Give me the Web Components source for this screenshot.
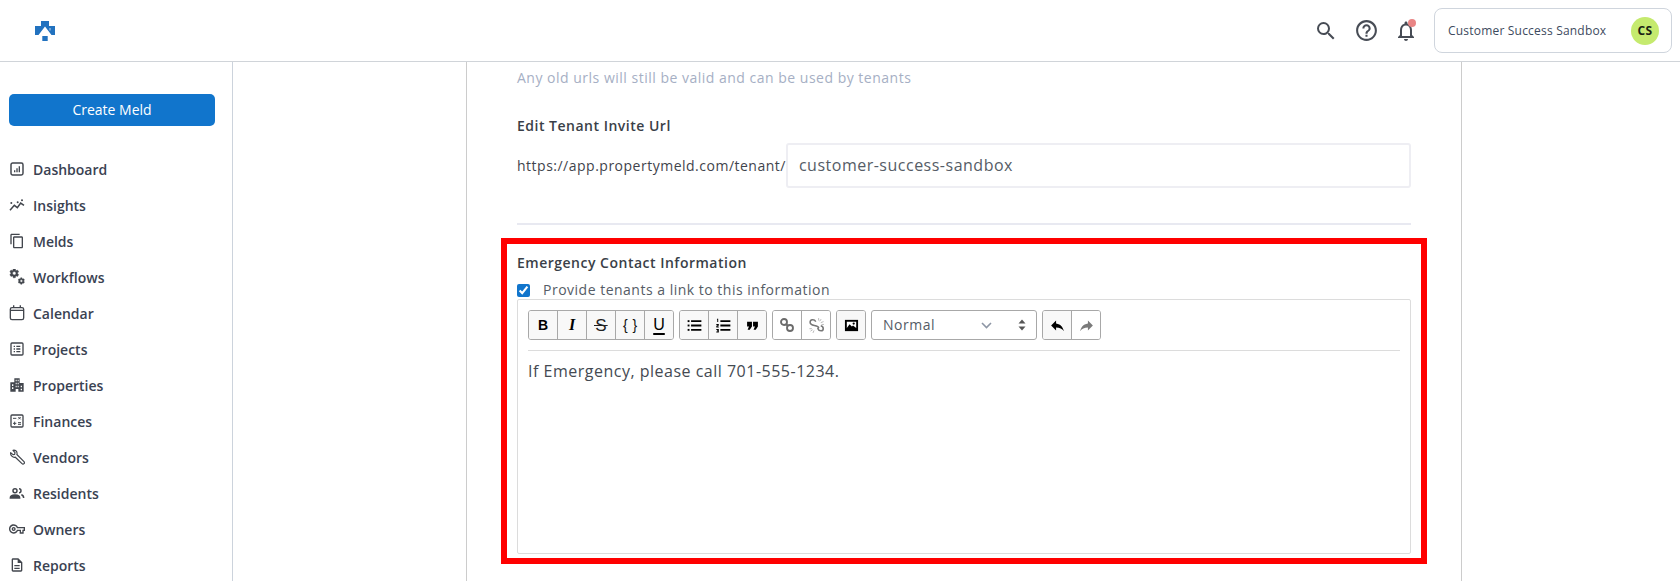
<!DOCTYPE html>
<html>
<head>
<meta charset="utf-8">
<title>Tenant settings</title>
<style>
  html, body { margin: 0; height: 581px; overflow: hidden; background: #fff; }
  body { font-family: "Open Sans", "Liberation Sans", sans-serif; color: #3a4252; }
</style>
</head>
<body>
<app-shell>
  <top-bar slot="top"></top-bar>
  <side-nav slot="side"></side-nav>
  <settings-panel slot="main"></settings-panel>
</app-shell>

<script>
const GEAR = 'M19.14 12.94c.04-.3.06-.61.06-.94 0-.32-.02-.64-.07-.94l2.03-1.58a.49.49 0 0 0 .12-.61l-1.92-3.32a.488.488 0 0 0-.59-.22l-2.39.96c-.5-.38-1.03-.7-1.62-.94l-.36-2.54a.484.484 0 0 0-.48-.41h-3.84c-.24 0-.43.17-.47.41l-.36 2.54c-.59.24-1.13.57-1.62.94l-2.39-.96c-.22-.08-.47 0-.59.22L2.74 8.87c-.12.21-.08.47.12.61l2.03 1.58c-.05.3-.09.63-.09.94s.02.64.07.94l-2.03 1.58a.49.49 0 0 0-.12.61l1.92 3.32c.12.22.37.29.59.22l2.39-.96c.5.38 1.03.7 1.62.94l.36 2.54c.05.24.24.41.48.41h3.84c.24 0 .44-.17.47-.41l.36-2.54c.59-.24 1.13-.56 1.62-.94l2.39.96c.22.08.47 0 .59-.22l1.92-3.32c.12-.22.07-.47-.12-.61l-2.01-1.58zM12 15.6c-1.98 0-3.6-1.62-3.6-3.6s1.62-3.6 3.6-3.6 3.6 1.62 3.6 3.6-1.62 3.6-3.6 3.6z';

const ICONS = {
  dashboard: '<rect x="3" y="3" width="18" height="18" rx="2.5" fill="none" stroke="currentColor" stroke-width="2.2"/><path d="M7.500 14h2v3h-2zM11 11h2v6h-2zM14.500 8h2v9h-2z" fill="currentColor"/>',
  insights: '<path d="M1.500 20l6.500-7.500 4.500 3.500 5-7 5 3.500" fill="none" stroke="currentColor" stroke-width="2.300"/><circle cx="3.500" cy="9" r="1.500" fill="currentColor"/><circle cx="13" cy="8" r="1.500" fill="currentColor"/><circle cx="19.500" cy="5" r="1.500" fill="currentColor"/>',
  melds: '<path fill="currentColor" d="M16 1H4c-1.1 0-2 .9-2 2v14h2V3h12V1zm3 4H8c-1.1 0-2 .9-2 2v14c0 1.1.9 2 2 2h11c1.1 0 2-.9 2-2V7c0-1.1-.9-2-2-2zm0 16H8V7h11v14z"/>',
  workflows: `<g fill="currentColor" stroke="currentColor"><path transform="translate(-.5 -2) scale(.7)" stroke-width="1" d="${GEAR}"/><path transform="translate(12.500 12) scale(.5)" stroke-width="1.200" d="${GEAR}"/></g>`,
  calendar: '<rect x="2" y="4" width="20" height="18" rx="2.500" fill="none" stroke="currentColor" stroke-width="2"/><path d="M2 8h20M7 .5v4M17 .5v4" stroke="currentColor" stroke-width="2" fill="none"/>',
  projects: '<rect x="3" y="3" width="18" height="18" rx="1.500" fill="none" stroke="currentColor" stroke-width="2"/><path d="M7 7h2v2H7zM7 11h2v2H7zM7 15h2v2H7zM11 7h6v2h-6zM11 11h6v2h-6zM11 15h6v2h-6z" fill="currentColor"/>',
  properties: '<path fill="currentColor" fill-rule="evenodd" d="M8 2h8v7h6v13h-8v-4h-4v4H2V8h6V2zm2 2v2.500h1.500V4H10zm3 0v2.500h1.500V4H13zm-3 4.500V11h1.500V8.500H10zm3 0V11h1.500V8.500H13zm-3 4.500v2.500h1.500V13H10zm3 0v2.500h1.500V13H13zM4.500 11v2.500h2V11h-2zm0 4.500V18h2v-2.500h-2zm13-2.500v2.500h2V13h-2zm0 4.500V20h2v-2.500h-2z"/>',
  finances: '<rect x="3" y="3" width="18" height="18" rx="1.500" fill="none" stroke="currentColor" stroke-width="2"/><path d="M6 8h5M6 15.500h5M8.500 13v5M13.500 14.500h4.500M13.500 17h4.500M14 6l3.500 3.500M17.500 6L14 9.500" stroke="currentColor" stroke-width="1.500" fill="none"/>',
  vendors: '<path d="M2.500 5.500l3.500 3 2.500-.5.500-2.500-3-3.500c3-.8 6.500 1.200 6 5l-.2 1.200L22.500 19a2 2 0 0 1-3 3l-10-9.700c-3.800 1-7.800-2.800-7-6.800z" fill="none" stroke="currentColor" stroke-width="1.800" stroke-linejoin="round"/>',
  residents: '<g fill="none" stroke="currentColor" stroke-width="2.200"><circle cx="9" cy="8.500" r="3"/><path d="M2 19.500c0-3 3-4.500 7-4.500s7 1.500 7 4.500z" fill="currentColor"/><path d="M15 5.500a3 3 0 0 1 0 6M18.500 14.500c2 .5 3.500 2 3.500 5"/></g>',
  owners: '<path fill="currentColor" d="M22 19h-6v-4h-2.680c-1.140 2.420-3.600 4-6.320 4-3.860 0-7-3.140-7-7s3.140-7 7-7c2.720 0 5.170 1.580 6.320 4H24v6h-2v4zm-4-2h2v-4h2v-2H11.940l-.23-.67C11.010 8.340 9.110 7 7 7c-2.760 0-5 2.240-5 5s2.240 5 5 5c2.110 0 4.010-1.340 4.710-3.330l.23-.67H18v4zM7 15c-1.650 0-3-1.350-3-3s1.350-3 3-3 3 1.350 3 3-1.350 3-3 3zm0-4c-.55 0-1 .45-1 1s.45 1 1 1 1-.45 1-1-.45-1-1-1z"/>',
  reports: '<path fill="currentColor" d="M8 16h8v2H8zm0-4h8v2H8zm6-10H6c-1.100 0-2 .9-2 2v16c0 1.100.89 2 1.990 2H18c1.100 0 2-.9 2-2V8l-6-6zm4 18H6V4h7v5h5v11z"/>',
  search: '<path fill="currentColor" d="M15.500 14h-.79l-.28-.27A6.471 6.471 0 0 0 16 9.500 6.500 6.500 0 1 0 9.500 16c1.610 0 3.090-.59 4.230-1.570l.27.28v.79l5 4.990L20.490 19l-4.990-5zm-6 0C7.010 14 5 11.990 5 9.500S7.010 5 9.500 5 14 7.010 14 9.500 11.990 14 9.500 14z"/>',
  help: '<path fill="currentColor" d="M11 18h2v-2h-2v2zm1-16C6.480 2 2 6.480 2 12s4.480 10 10 10 10-4.480 10-10S17.520 2 12 2zm0 18c-4.410 0-8-3.590-8-8s3.590-8 8-8 8 3.590 8 8-3.590 8-8 8zm0-14c-2.210 0-4 1.790-4 4h2c0-1.100.9-2 2-2s2 .9 2 2c0 2-3 1.750-3 5h2c0-2.250 3-2.500 3-5 0-2.210-1.790-4-4-4z"/>',
  bell: '<path fill="currentColor" d="M12 22c1.100 0 2-.9 2-2h-4c0 1.100.9 2 2 2zm6-6v-5c0-3.070-1.630-5.640-4.500-6.320V4c0-.83-.67-1.500-1.500-1.500s-1.500.67-1.500 1.500v.68C7.640 5.360 6 7.920 6 11v5l-2 2v1h16v-1l-2-2zm-2 1H8v-6c0-2.480 1.510-4.500 4-4.500s4 2.020 4 4.500v6z"/>',
  ul: '<g fill="#000"><rect x="1" y="3.500" width="3" height="3"/><rect x="1" y="10.500" width="3" height="3"/><rect x="1" y="17.500" width="3" height="3"/><path d="M6.500 3.500H23v3H6.500zM6.500 10.500H23v3H6.500zM6.500 17.500H23v3H6.500z"/></g>',
  ol: '<g fill="#000"><path d="M1.500 1h2v5.500h-1.500V2.500h-.5zM.5 9.500h4V12l-2.500 1.500h2.500V15H.5v-2.500L3 11H.5zM.5 17.500h4V23h-4v-1.500H3V21H1.500v-1.500H3V19H.5z"/><path d="M7 3.500h16v3H7zM7 10.500h16v3H7zM7 17.500h16v3H7z"/></g>',
  quote: '<path fill="#000" d="M2 5h9v9l-4 6H3l2.500-6H2zM13 5h9v9l-4 6h-4l2.500-6H13z"/>',
  link: '<g fill="none" stroke="#6b6b6b" stroke-width="2.800"><circle cx="7.500" cy="7.500" r="4.500"/><circle cx="16.500" cy="16.500" r="4.500"/><path d="M10.500 10.500l3 3"/></g>',
  unlink: '<g fill="none"><path d="M11 6.500C8.500 2.500 3 3.500 3 7.500c0 3 3 4 6 4.500 3 .5 6 1.500 6 3l-1 1.500c1.500 4 7.500 4 7.500 0 0-2-1.500-3.500-3.500-4" stroke="#777" stroke-width="2.200"/><path d="M15 1.500v3.500M18.500 3L16.500 6M22 6.500l-4 1.500M22.500 10.500h-3.500M2 16.500h3.500M3.500 20l3-2M7 22.500l1.500-3.500" stroke="#b5b5b5" stroke-width="1.300"/></g>',
  image: '<rect x="1.500" y="3" width="21" height="18" fill="#000"/><rect x="4.500" y="6" width="15" height="10" fill="#fff"/><path fill="#000" d="M4.500 16l4.500-6 3.500 3.500 2-1.500 5 4z"/><circle cx="15.500" cy="8.800" r="1.800" fill="#000"/>',
  undo: '<path fill="#000" d="M10 9V5l-7 7 7 7v-4.100c5 0 8.500 1.600 11 5.100-1-5-4-10-11-11z"/>',
  redo: '<path fill="#7a7a7a" d="M14 9V5l7 7-7 7v-4.100c-5 0-8.500 1.600-11 5.100 1-5 4-10 11-11z"/>'
};

function svg(name, size) {
  return `<svg width="${size}" height="${size}" viewBox="0 0 24 24" aria-hidden="true">${ICONS[name]}</svg>`;
}

class AppShell extends HTMLElement {
  constructor() {
    super();
    this.attachShadow({ mode: 'open' });
    this.shadowRoot.innerHTML = `
      <style>
        :host { display: flex; flex-direction: column; height: 581px; overflow: hidden; }
        .body { display: flex; flex: 1; min-height: 0; }
        ::slotted([slot="top"]) { flex: none; }
        ::slotted([slot="side"]) { flex: none; }
        ::slotted([slot="main"]) { flex: none; }
      </style>
      <slot name="top"></slot>
      <div class="body">
        <slot name="side"></slot>
        <slot name="main"></slot>
      </div>
    `;
  }
}

class TopBar extends HTMLElement {
  constructor() {
    super();
    this.attachShadow({ mode: 'open' });
    this.shadowRoot.innerHTML = `
      <style>
        :host { display: flex; align-items: center; height: 61px; border-bottom: 1px solid #d0d4d9; box-sizing: content-box; }
        .logo { margin-left: 35px; display: block; }
        .tools { margin-left: auto; display: flex; align-items: center; color: #474c55; }
        .tools svg { display: block; }
        .search { margin-right: 16px; }
        .help { margin-right: 15px; }
        .bell { position: relative; margin-right: 16px; }
        .dot { position: absolute; top: 0; right: 2px; width: 8px; height: 8px; border-radius: 50%; background: #e98585; }
        .org { display: flex; align-items: center; width: 238px; height: 45px; box-sizing: border-box; margin-right: 8px; padding: 0 12px 0 13px; border: 1px solid #cfd5dd; border-radius: 8px; font-size: 12px; letter-spacing: .2px; color: #3d4a5e; }
        .avatar { margin-left: auto; width: 28px; height: 28px; border-radius: 50%; background: #c5ea6e; color: #1a1f14; display: flex; align-items: center; justify-content: center; font-weight: 700; font-size: 12px; letter-spacing: .4px; }
      </style>
      <svg class="logo" width="20" height="20" viewBox="0 0 20 20">
        <path fill="#2272bf" d="M6 0h8v5h6v9h-3.500L10 5.500 3.500 14H0V5h6z"/>
        <path fill="#2272bf" d="M7.300 15h5.400v5H7.300z"/>
        <path fill="#fff" opacity=".7" d="M14.500 7h1v2.500h-1z"/>
      </svg>
      <div class="tools">
        <span class="search">${svg('search', 24)}</span>
        <span class="help">${svg('help', 25)}</span>
        <span class="bell">${svg('bell', 24)}<span class="dot"></span></span>
        <div class="org"><span>Customer Success Sandbox</span><span class="avatar">CS</span></div>
      </div>
    `;
  }
}

class NavItem extends HTMLElement {
  constructor() {
    super();
    this.attachShadow({ mode: 'open' });
    const icon = this.getAttribute('icon');
    this.shadowRoot.innerHTML = `
      <style>
        :host { display: flex; align-items: center; height: 36px; font-size: 14px; font-weight: 600; color: #3a4252; }
        .ic { width: 16px; height: 16px; margin-left: 9px; margin-right: 8px; color: #42464d; }
        svg { display: block; }
      </style>
      <span class="ic">${svg(icon, 16)}</span>
      <span><slot></slot></span>
    `;
  }
}

class SideNav extends HTMLElement {
  constructor() {
    super();
    this.attachShadow({ mode: 'open' });
    const items = [
      ['dashboard', 'Dashboard'], ['insights', 'Insights'], ['melds', 'Melds'], ['workflows', 'Workflows'],
      ['calendar', 'Calendar'], ['projects', 'Projects'], ['properties', 'Properties'], ['finances', 'Finances'],
      ['vendors', 'Vendors'], ['residents', 'Residents'], ['owners', 'Owners'], ['reports', 'Reports']
    ];
    this.shadowRoot.innerHTML = `
      <style>
        :host { display: block; width: 233px; box-sizing: border-box; border-right: 1px solid #ccd3dc; padding-top: 32px; }
        .create { display: flex; align-items: center; justify-content: center; width: 206px; height: 32px; box-sizing: border-box; padding-bottom: 2px; margin-left: 9px; margin-bottom: 25px; border-radius: 5px; background: #1175cc; color: #fff; font-size: 14px; font-weight: 500; }
      </style>
      <div class="create">Create Meld</div>
      ${items.map(([icon, label]) => `<nav-item icon="${icon}">${label}</nav-item>`).join('')}
    `;
  }
}

class ToolButton extends HTMLElement {
  constructor() {
    super();
    this.attachShadow({ mode: 'open' });
    this.shadowRoot.innerHTML = `
      <style>
        :host { display: flex; align-items: center; justify-content: center; width: 29px; height: 28px; box-sizing: border-box; background: var(--btn-bg, #f8f8f8); color: #000; border-left: 1px solid #a8a8a8; letter-spacing: 0; }
        :host(:first-child) { border-left: 0; width: 28px; }
        ::slotted(svg) { display: block; }
      </style>
      <slot></slot>
    `;
  }
}

class ToolGroup extends HTMLElement {
  constructor() {
    super();
    this.attachShadow({ mode: 'open' });
    this.shadowRoot.innerHTML = `
      <style>
        :host { display: flex; box-sizing: border-box; height: 30px; border: 1px solid #a8a8a8; border-radius: 3px; overflow: hidden; margin-right: 5px; }
      </style>
      <slot></slot>
    `;
  }
}

class RichEditor extends HTMLElement {
  constructor() {
    super();
    this.attachShadow({ mode: 'open' });
    const txt = (style, t) => `<tool-button><span style="${style}">${t}</span></tool-button>`;
    const ic = (name, size, bg) => `<tool-button${bg ? ` style="--btn-bg:${bg}"` : ''}>${svg(name, size)}</tool-button>`;
    this.shadowRoot.innerHTML = `
      <style>
        :host { display: block; height: 255px; box-sizing: border-box; border: 1px solid #dcdcdc; border-radius: 2px; padding: 10px 10px 0; }
        .bar { display: flex; padding-bottom: 10px; border-bottom: 1px solid #dcdcdc; }
        .select { display: flex; align-items: center; box-sizing: border-box; width: 166px; height: 30px; margin-right: 5px; padding: 0 10px 0 11px; border: 1px solid #a8a8a8; border-radius: 3px; color: #555c66; font-size: 14px; }
        .select span { margin-top: -2px; }
        .chev { margin-left: auto; margin-right: 26px; display: block; }
        .updown { display: block; }
        .body { margin: 9px 0 0; font-size: 16px; line-height: 22px; color: #444a52; }
      </style>
      <div class="bar">
        <tool-group>
          ${txt('font:700 14px/1 \'Liberation Sans\',sans-serif', 'B')}
          ${txt('font:italic 700 16px/1 \'Liberation Serif\',serif', 'I')}
          ${txt('font:400 17px/1 \'Liberation Sans\',sans-serif;color:#222;padding:0 1px;background:linear-gradient(#222,#222) center 50%/100% 1px no-repeat', 'S')}
          ${txt('font:400 14px/1 \'Liberation Sans\',sans-serif;color:#111;word-spacing:1px', '{ }')}
          ${txt('font:400 16px/1 \'Liberation Sans\',sans-serif;text-decoration:underline;text-underline-offset:3px;text-decoration-thickness:2px', 'U')}
        </tool-group>
        <tool-group>
          ${ic('ul', 15)}${ic('ol', 15)}${ic('quote', 13)}
        </tool-group>
        <tool-group>
          ${ic('link', 16, '#fff')}${ic('unlink', 17, '#fff')}
        </tool-group>
        <tool-group>
          ${ic('image', 15)}
        </tool-group>
        <div class="select">
          <span>Normal</span>
          <svg class="chev" width="11" height="7" viewBox="0 0 11 7"><path d="M1 1l4.500 4.500L10 1" fill="none" stroke="#8d96a5" stroke-width="1.600"/></svg>
          <svg class="updown" width="8" height="12" viewBox="0 0 8 12"><path d="M4 .5l3.500 4h-7zM4 11.500L.5 7.500h7z" fill="#555"/></svg>
        </div>
        <tool-group>
          ${ic('undo', 17)}${ic('redo', 17, '#fff')}
        </tool-group>
      </div>
      <div class="body"><slot></slot></div>
    `;
  }
}

class SettingsPanel extends HTMLElement {
  constructor() {
    super();
    this.attachShadow({ mode: 'open' });
    this.shadowRoot.innerHTML = `
      <style>
        :host { display: block; width: 996px; box-sizing: border-box; margin-left: 233px; padding: 6px 50px 0; border-left: 1px solid #ccc; border-right: 1px solid #ccc; height: 519px; overflow: hidden; letter-spacing: .5px; }
        .hint { font-size: 14px; line-height: 20px; color: #a6afc4; }
        .label { margin-top: 28px; font-size: 14px; line-height: 20px; font-weight: 600; color: #3a3f48; }
        .url { display: flex; align-items: center; margin-top: 7px; font-size: 14px; color: #3f444c; }
        .input { flex: 1; box-sizing: border-box; height: 45px; padding: 0 0 2px 11px; display: flex; align-items: center; border: 2px solid #eeeef3; border-radius: 3px; font-size: 16px; color: #555c66; }
        hr { height: 2px; margin: 35px 0 13px; border: 0; background: #e8e9f1; }
        .marked { margin: 0 -16px; padding: 10px 10px 4px; border: 6px solid #f00; }
        .title { font-size: 14px; line-height: 18px; font-weight: 600; color: #3a3f48; }
        .check { display: flex; align-items: center; margin: 9px 0 0; font-size: 14px; line-height: 18px; color: #555c66; }
        input { width: 13px; height: 13px; margin: 0 13px 0 0; accent-color: #1175cc; }
      </style>
      <div class="hint">Any old urls will still be valid and can be used by tenants</div>
      <div class="label">Edit Tenant Invite Url</div>
      <div class="url"><span>https://app.propertymeld.com/tenant/</span><div class="input">customer-success-sandbox</div></div>
      <hr>
      <section class="marked">
        <div class="title">Emergency Contact Information</div>
        <label class="check"><input type="checkbox" checked><span>Provide tenants a link to this information</span></label>
        <rich-editor>If Emergency, please call 701-555-1234.</rich-editor>
      </section>
    `;
  }
}

customElements.define('nav-item', NavItem);
customElements.define('side-nav', SideNav);
customElements.define('tool-button', ToolButton);
customElements.define('tool-group', ToolGroup);
customElements.define('rich-editor', RichEditor);
customElements.define('settings-panel', SettingsPanel);
customElements.define('top-bar', TopBar);
customElements.define('app-shell', AppShell);
</script>
</body>
</html>
